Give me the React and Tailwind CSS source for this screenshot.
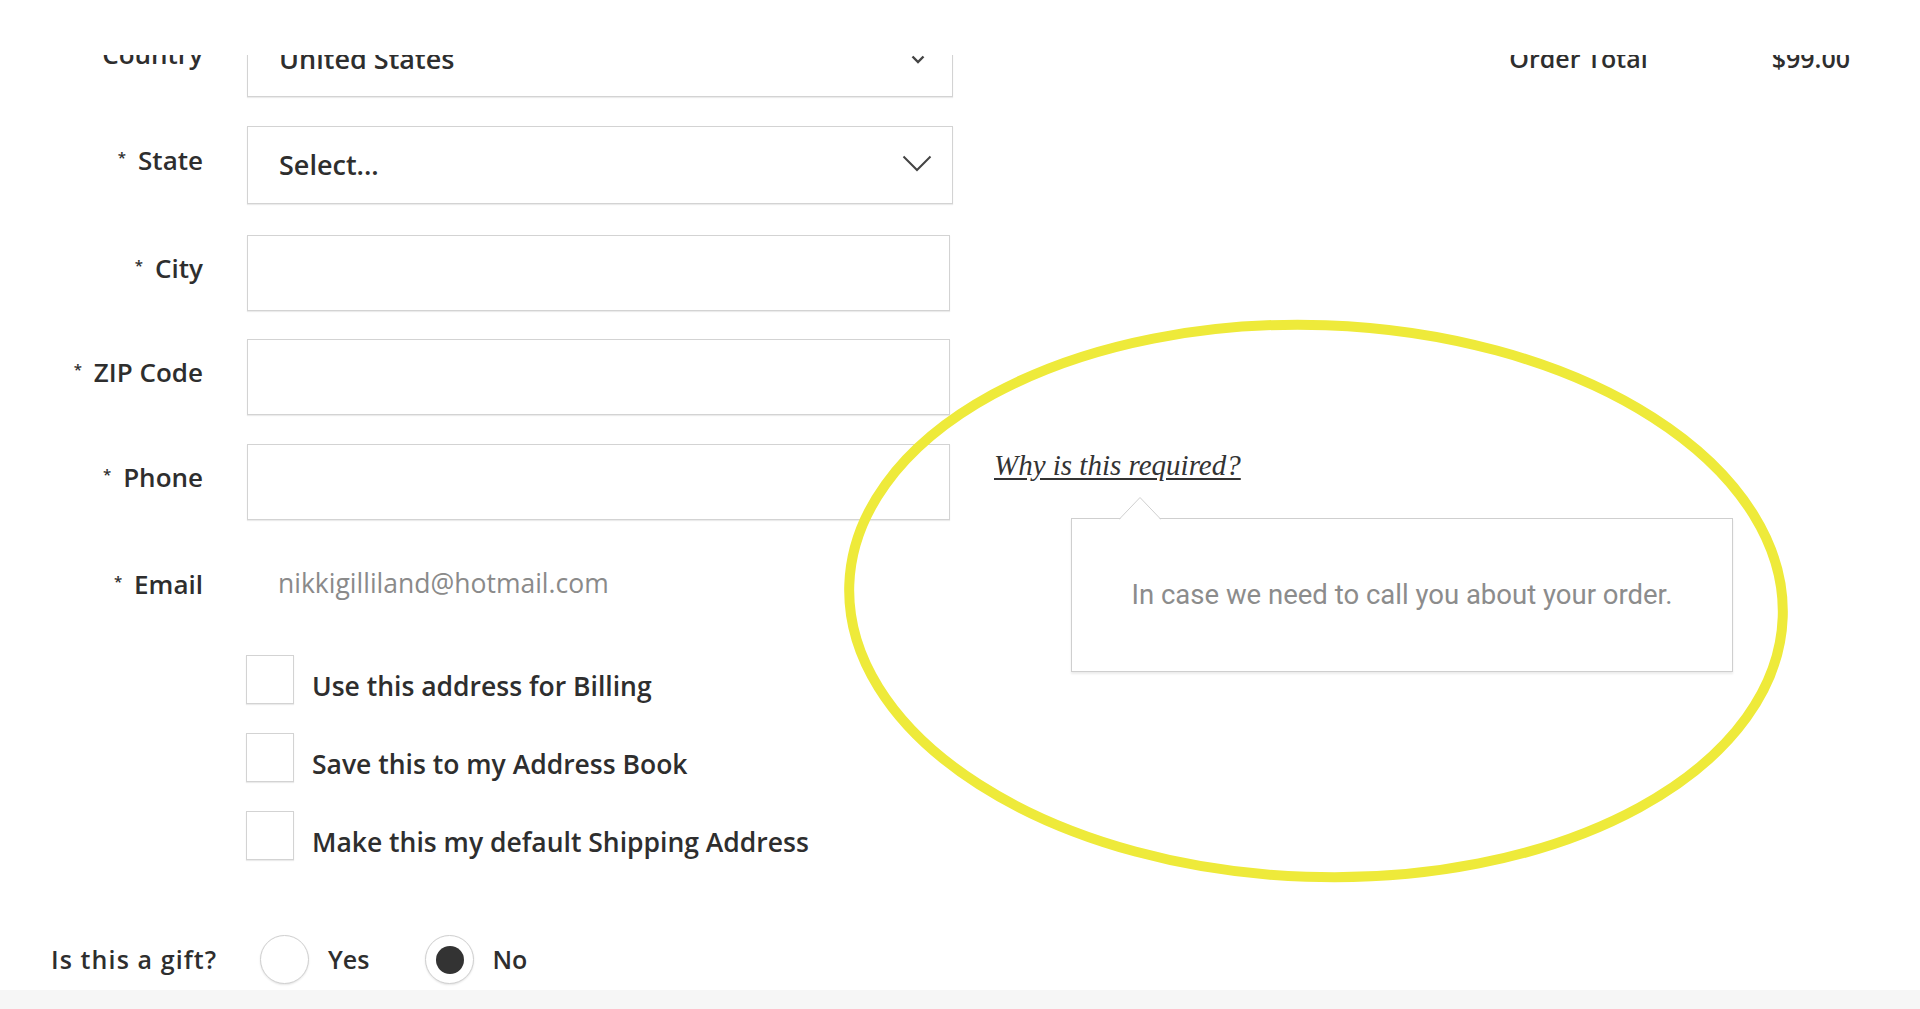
const labelFont = { fontFamily: '"Open Sans", "Liberation Sans", sans-serif' };

const Req = () => (
  <span className="relative -top-[7px] mr-[12px] text-[15px]">*</span>
);

const Chevron = ({ small }) =>
  small ? (
    <svg width="14" height="9" viewBox="0 0 14 9" className="text-[#444]">
      <polyline points="1.5,1.5 7,7 12.5,1.5" fill="none" stroke="currentColor" strokeWidth="2.4" />
    </svg>
  ) : (
    <svg width="30" height="17" viewBox="0 0 30 17" className="-mt-[4px] text-[#444]">
      <polyline points="1.5,1.5 15,15 28.5,1.5" fill="none" stroke="currentColor" strokeWidth="2" />
    </svg>
  );

const FieldRow = ({ label, children, extra, className = "" }) => (
  <div className={`flex items-center ${className}`}>
    <div className="w-[203px] shrink-0 -mt-[10px] text-right text-[26px] font-semibold text-[#2e2e2e]">
      <Req />
      {label}
    </div>
    <div className="ml-[44px] shrink-0">{children}</div>
    {extra}
  </div>
);

const TextBox = () => (
  <div className="h-[76px] w-[703px] border border-[#d3d3d3] bg-white shadow-[0_1px_1px_rgba(0,0,0,0.08)]" />
);

const SelectBox = ({ value, small, tall }) => (
  <div
    className={`flex ${tall ? "h-[78px]" : "h-[76px]"} w-[706px] items-center justify-between border border-[#d3d3d3] bg-white pl-[31px] ${small ? "pr-[27px]" : "pr-[20px]"} shadow-[0_1px_1px_rgba(0,0,0,0.08)]`}
  >
    <span className="text-[27px] font-semibold text-[#2e2e2e]">{value}</span>
    <Chevron small={small} />
  </div>
);

const Checkbox = ({ label }) => (
  <div className="flex h-[49px] items-center">
    <div className="h-[49px] w-[48px] shrink-0 border border-[#d3d3d3] bg-white shadow-[0_1px_1px_rgba(0,0,0,0.08)]" />
    <span className="ml-[18px] mt-[12px] text-[26.5px] font-semibold leading-[36px] text-[#2e2e2e]">
      {label}
    </span>
  </div>
);

const Radio = ({ checked }) => (
  <div className="flex h-[49px] w-[49px] items-center justify-center rounded-full border border-[#cfcfcf] bg-white shadow-[0_1px_2px_rgba(0,0,0,0.1)]">
    {checked && <div className="h-[28px] w-[28px] rounded-full bg-[#333]" />}
  </div>
);

const HelpLink = () => (
  <div className="relative ml-[44px] mt-[-34px] self-center">
    <a
      href="#"
      className="text-[29px] italic leading-[32px] text-[#333] underline underline-offset-[3px]"
      style={{ fontFamily: '"Liberation Serif", serif' }}
    >
      Why is this required?
    </a>
    {/* tooltip */}
    <div className="absolute left-[77px] top-[69px] z-10 flex h-[154px] w-[662px] items-center justify-center border border-[#cfcfcf] bg-white shadow-[0_2px_2px_rgba(0,0,0,0.08)]">
      <svg
        className="absolute -top-[22px] left-[47px]"
        width="42"
        height="23"
        viewBox="0 0 42 23"
      >
        <polygon points="0,23 21,0 42,23" fill="#fff" />
        <polyline points="0,22.5 21,0.5 42,22.5" fill="none" stroke="#cfcfcf" strokeWidth="1" />
      </svg>
      <span
        className="text-[27.5px] text-[#8c8c8c]"
        style={{ fontFamily: 'Roboto, "Liberation Sans", sans-serif' }}
      >
        In case we need to call you about your order.
      </span>
    </div>
  </div>
);

export default function App() {
  return (
    <div className="relative h-[1009px] w-[1920px] overflow-hidden bg-white" style={labelFont}>
      <div className="h-[55px] bg-white" />

      <div className="h-[935px] overflow-hidden">
        <div className="-mt-[34px] flex">
          {/* form column */}
          <div className="flex w-[1400px] shrink-0 flex-col">
            <div className="flex flex-col gap-[29px]">
              <div className="flex items-center">
                <div className="w-[203px] shrink-0 -mt-[10px] text-right text-[26px] font-semibold text-[#2e2e2e]">
                  Country
                </div>
                <div className="ml-[44px]">
                  <SelectBox value="United States" small />
                </div>
              </div>
              <FieldRow label="State">
                <SelectBox value="Select..." tall />
              </FieldRow>
              <FieldRow label="City" className="mt-[2px]">
                <TextBox />
              </FieldRow>
              <FieldRow label="ZIP Code" className="-mt-[1px]">
                <TextBox />
              </FieldRow>
              <FieldRow label="Phone" extra={<HelpLink />}>
                <TextBox />
              </FieldRow>
              <div className="flex h-[70px] items-center">
                <div className="w-[203px] shrink-0 text-right text-[26px] font-semibold text-[#2e2e2e]">
                  <Req />
                  Email
                </div>
                <div className="ml-[44px] pl-[31px] text-[26.5px] text-[#8a8a8a]">
                  nikkigilliland@hotmail.com
                </div>
              </div>
            </div>

            <div className="ml-[246px] mt-[36px] flex flex-col gap-[29px]">
              <Checkbox label="Use this address for Billing" />
              <Checkbox label="Save this to my Address Book" />
              <Checkbox label="Make this my default Shipping Address" />
            </div>

            <div className="mt-[75px] flex items-center pl-[51px] text-[25px] font-semibold text-[#2e2e2e]">
              <span className="w-[167px] shrink-0 tracking-[1.1px]">Is this a gift?</span>
              <div className="ml-[42px]">
                <Radio />
              </div>
              <span className="ml-[19px]">Yes</span>
              <div className="ml-[56px]">
                <Radio checked />
              </div>
              <span className="ml-[18px]">No</span>
            </div>
          </div>

          {/* summary column */}
          <div className="flex h-[76px] flex-1 items-center justify-end pr-[70px] text-[25px] font-semibold text-[#2e2e2e]">
            <span>Order Total</span>
            <span className="ml-[124px]">$99.00</span>
          </div>
        </div>
      </div>

      <div className="h-[19px] bg-[#f6f6f6]" />

      {/* annotation ring */}
      <svg
        className="pointer-events-none absolute left-[837px] top-[314px] overflow-visible"
        width="957"
        height="575"
        viewBox="0 0 957 575"
      >
        <ellipse
          cx="479"
          cy="287"
          rx="467"
          ry="276"
          fill="none"
          stroke="#eeea3a"
          strokeWidth="10"
          transform="rotate(2 479 287)"
        />
      </svg>
    </div>
  );
}
